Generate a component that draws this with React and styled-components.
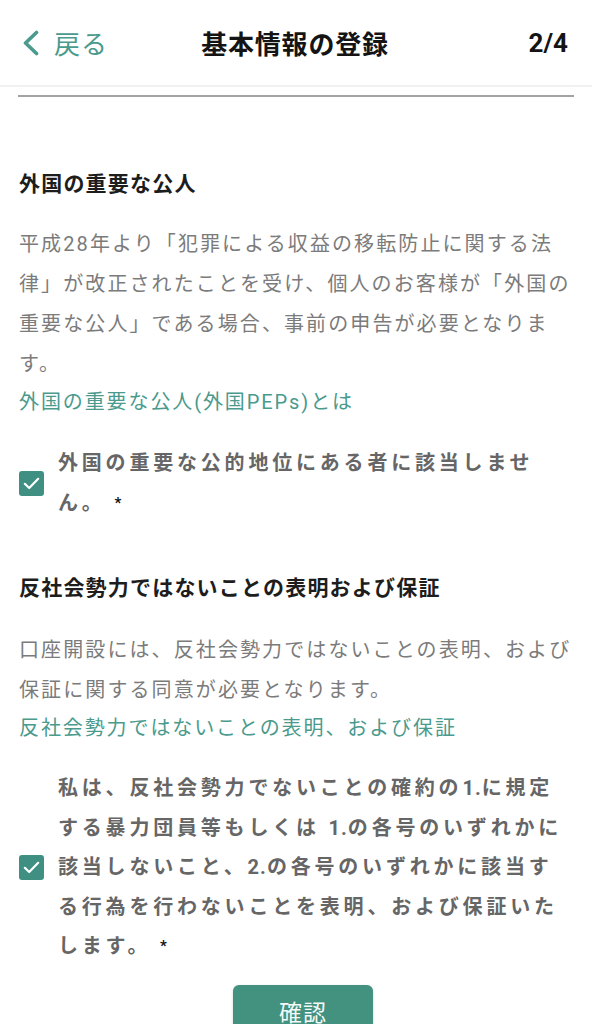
import React from "react";
import styled, { createGlobalStyle } from "styled-components";

const GlobalStyle = createGlobalStyle`
  html, body {
    margin: 0;
    padding: 0;
    background: #ffffff;
  }
  body {
    font-family: Roboto, "Noto Sans CJK JP", "Noto Sans", sans-serif;
    -webkit-font-smoothing: antialiased;
  }
  * { box-sizing: border-box; }
`;

const TEAL = "#4a9a8d";
const CHECK = "#3f8f82";

const Page = styled.div`
  width: 592px;
  min-height: 1024px;
  overflow: hidden;
  background: #fff;
`;

const Header = styled.header`
  height: 87px;
  display: grid;
  grid-template-columns: 1fr auto 1fr;
  align-items: center;
  padding: 0 24px 0 22px;
  border-bottom: 2px solid #f1f1f1;
`;

const BackLink = styled.a`
  display: flex;
  align-items: center;
  gap: 14px;
  color: ${TEAL};
  font-size: 26px;
  letter-spacing: 1px;
  text-decoration: none;
  justify-self: start;
`;

const Title = styled.h1`
  margin: 0;
  font-size: 26px;
  font-weight: 700;
  color: #141414;
  letter-spacing: 0.8px;
`;

const Step = styled.div`
  justify-self: end;
  font-size: 26px;
  font-weight: 700;
  color: #141414;
`;

const Divider = styled.hr`
  margin: 8px 18px 0 18px;
  border: none;
  height: 2px;
  background: #a3a3a3;
`;

const Content = styled.main`
  padding: 0 18px 0 19px;
  display: flex;
  flex-direction: column;
`;

const Section = styled.section`
  display: flex;
  flex-direction: column;
  margin-top: ${(p) => p.$top}px;
`;

const Heading = styled.h2`
  margin: 0;
  font-size: 21px;
  line-height: 30px;
  font-weight: 700;
  color: #1d1d1d;
  letter-spacing: 1.2px;
`;

const Paragraph = styled.p`
  margin: ${(p) => p.$gap}px 0 0 0;
  font-size: 20px;
  line-height: 40px;
  color: #7b7b7b;
  letter-spacing: 2.1px;
`;

const TextLink = styled.a`
  display: block;
  font-size: 20px;
  line-height: 36px;
  color: ${TEAL};
  letter-spacing: 1.9px;
  text-decoration: none;
`;

const CheckRow = styled.label`
  display: flex;
  align-items: center;
  gap: 14px;
  margin-top: 23px;
`;

const Box = styled.span`
  flex: 0 0 25px;
  width: 25px;
  height: 25px;
  border-radius: 3px;
  background: ${CHECK};
  display: flex;
  align-items: center;
  justify-content: center;
`;

const CheckText = styled.span`
  flex: 1 1 auto;
  font-size: 20px;
  line-height: ${(p) => p.$lh}px;
  font-weight: 700;
  color: #666666;
  letter-spacing: 3.8px;
`;

const Num = styled.span`
  letter-spacing: 1px;
`;

const Required = styled.span`
  color: #111;
  font-size: 15px;
  font-weight: 700;
  letter-spacing: 0;
  vertical-align: 2px;
`;

const ButtonWrap = styled.div`
  display: flex;
  justify-content: center;
  margin-top: 18px;
  padding-left: 13px;
`;

const Button = styled.button`
  width: 140px;
  height: 52px;
  border: none;
  border-radius: 6px;
  background: #43917f;
  color: #f4faf8;
  font-family: inherit;
  font-size: 23px;
  letter-spacing: 1px;
  box-shadow: 0 1px 3px rgba(0, 0, 0, 0.18);
`;

const Chevron = () => (
  <svg width="18" height="26" viewBox="0 0 18 26" fill="none">
    <polyline
      points="14.5,2.5 3.5,13 14.5,23.5"
      stroke={TEAL}
      strokeWidth="3.6"
      strokeLinecap="round"
      strokeLinejoin="round"
    />
  </svg>
);

const CheckMark = () => (
  <svg width="17" height="13" viewBox="0 0 17 13" fill="none">
    <polyline
      points="1.8,6.8 6.2,11 15.2,1.8"
      stroke="#ffffff"
      strokeWidth="2.2"
      strokeLinecap="round"
      strokeLinejoin="round"
    />
  </svg>
);

export default function App() {
  return (
    <Page>
      <GlobalStyle />
      <Header>
        <BackLink href="#">
          <Chevron />
          <span>戻る</span>
        </BackLink>
        <Title>基本情報の登録</Title>
        <Step>2/4</Step>
      </Header>
      <Divider />
      <Content>
        <Section $top={72}>
          <Heading>外国の重要な公人</Heading>
          <Paragraph $gap={25}>
            平成28年より「犯罪による収益の移転防止に関する法律」が改正されたことを受け、個人のお客様が「外国の重要な公人」である場合、事前の申告が必要となります。
          </Paragraph>
          <TextLink href="#">外国の重要な公人(外国PEPs)とは</TextLink>
          <CheckRow>
            <Box>
              <CheckMark />
            </Box>
            <CheckText $lh={40}>
              外国の重要な公的地位にある者に該当しません。 <Required>*</Required>
            </CheckText>
          </CheckRow>
        </Section>
        <Section $top={50}>
          <Heading>反社会勢力ではないことの表明および保証</Heading>
          <Paragraph $gap={27}>
            口座開設には、反社会勢力ではないことの表明、および保証に関する同意が必要となります。
          </Paragraph>
          <TextLink href="#">反社会勢力ではないことの表明、および保証</TextLink>
          <CheckRow>
            <Box>
              <CheckMark />
            </Box>
            <CheckText $lh={39.5}>
              私は、反社会勢力でないことの確約の<Num>1.</Num>に規定する暴力団員等もしくは <Num>1.</Num>の各号のいずれかに該当しないこと、<Num>2.</Num>の各号のいずれかに該当する行為を行わないことを表明、および保証いたします。 <Required>*</Required>
            </CheckText>
          </CheckRow>
        </Section>
        <ButtonWrap>
          <Button type="button">確認</Button>
        </ButtonWrap>
      </Content>
    </Page>
  );
}
